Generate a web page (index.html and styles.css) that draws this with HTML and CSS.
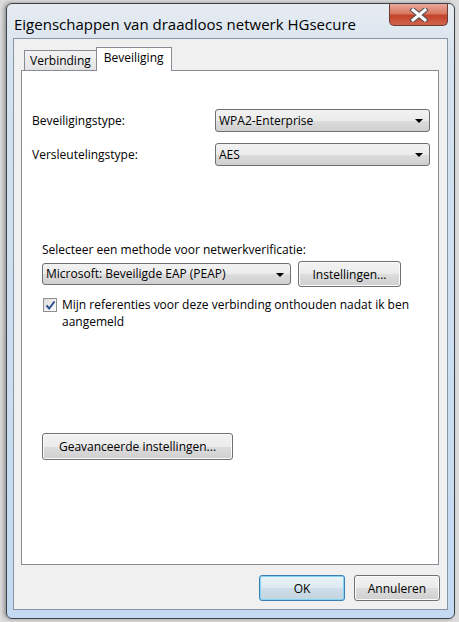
FILE: index.html
```html
<!DOCTYPE html>
<html lang="nl">
<head>
  <meta charset="UTF-8">
  <title>Eigenschappen van draadloos netwerk HGsecure</title>
  <link rel="stylesheet" href="styles.css">
</head>
<body>

<div class="window">
  <div class="titlebar">
    <span class="title">Eigenschappen van draadloos netwerk HGsecure</span>
    <div class="close">
      <svg width="20" height="14" viewBox="0 0 20 14">
        <path d="M4 2 L16 12 M16 2 L4 12" stroke="#4a4f56" stroke-width="5" stroke-linecap="square"/>
        <path d="M4 2 L16 12 M16 2 L4 12" stroke="#ffffff" stroke-width="3" stroke-linecap="square"/>
      </svg>
    </div>
  </div>

  <div class="client">
    <div class="tabs">
      <div class="tab">Verbinding</div>
      <div class="tab active">Beveiliging</div>
    </div>

    <div class="panel">
      <div class="row">
        <span class="label">Beveiligingstype:</span>
        <div class="select type">WPA2-Enterprise<span class="arrow"></span></div>
      </div>
      <div class="row">
        <span class="label">Versleutelingstype:</span>
        <div class="select type">AES<span class="arrow"></span></div>
      </div>

      <div class="auth">
        <div class="auth-label">Selecteer een methode voor netwerkverificatie:</div>
        <div class="auth-row">
          <div class="select method">Microsoft: Beveiligde EAP (PEAP)<span class="arrow"></span></div>
          <button class="btn settings">Instellingen...</button>
        </div>
        <div class="check">
          <span class="box">
            <svg width="11" height="11" viewBox="0 0 11 11">
              <path d="M1.5 5.5 L4.2 8.5 L9.5 1.5" fill="none" stroke="#2b4f8c" stroke-width="2"/>
            </svg>
          </span>
          <span class="check-text">Mijn referenties voor deze verbinding onthouden nadat ik ben aangemeld</span>
        </div>
      </div>

      <button class="btn advanced">Geavanceerde instellingen...</button>
    </div>

    <div class="footer">
      <button class="btn default">OK</button>
      <button class="btn">Annuleren</button>
    </div>
  </div>
</div>

</body>
</html>
```

FILE: styles.css
```css
* { box-sizing: border-box; }
body { margin: 0; width: 459px; height: 622px; overflow: hidden; background: #dcdcdc; font-family: "Open Sans", "Noto Sans", sans-serif; font-size: 12px; color: #000; }

.window { margin: 3px 0 0 6px; width: 449px; height: 616px; border: 1px solid #3d4249; border-radius: 6px; background: linear-gradient(#e6ebf0, #d5e2ef 60px, #c3daf2); box-shadow: -2px 0 4px rgba(0,0,0,0.35); display: flex; flex-direction: column; }

.titlebar { height: 34px; display: flex; justify-content: space-between; align-items: flex-start; padding-left: 7px; }
.title { font-size: 15px; line-height: 20px; margin-top: 10px; color: #000; }
.close { width: 59px; height: 22px; margin-right: 6px; border: 1px solid #6b3a33; border-top: none; border-radius: 0 0 5px 5px; background: linear-gradient(#e9a99c, #d9775f 45%, #c2432a 55%, #d0654c); display: flex; align-items: center; justify-content: center; }

.client { margin: 0 6px; height: 572px; border: 1px solid #8794a3; background: #f0f0f0; padding: 8px 0 0 7px; display: flex; flex-direction: column; }

.tabs { display: flex; align-items: flex-end; height: 24px; padding-left: 3px; margin-bottom: -1px; position: relative; z-index: 1; }
.tab { height: 20px; margin-bottom: 1px; padding: 0 5px; line-height: 19px; border: 1px solid #898c95; border-bottom: none; background: linear-gradient(#f3f3f3, #e3e3e3); }
.tab.active { height: 24px; margin-bottom: 0; margin-left: -1px; padding: 0 7px 0 7px; line-height: 20px; background: #fff; }

.panel { width: 418px; height: 495px; border: 1px solid #898c95; background: #fff; padding: 38px 8px 0 10px; display: flex; flex-direction: column; }

.row { display: flex; justify-content: space-between; align-items: center; margin-bottom: 11px; }

.select { position: relative; height: 23px; line-height: 21px; padding-left: 3px; border: 1px solid #707070; border-radius: 3px; background: linear-gradient(#f2f2f2, #ebebeb 50%, #dddddd 51%, #cfcfcf); }
.select.type { width: 215px; }
.arrow { position: absolute; right: 6px; top: 9px; border-left: 4px solid transparent; border-right: 4px solid transparent; border-top: 4px solid #000; }

.auth { margin: 65px 0 0 10px; }
.auth-label { line-height: 16px; }
.auth-row { display: flex; align-items: center; gap: 7px; margin-top: 3px; }
.select.method { width: 249px; height: 22px; line-height: 20px; }

.btn { font: inherit; color: #000; height: 26px; padding: 0; border: 1px solid #707070; border-radius: 3px; background: linear-gradient(#f2f2f2, #ebebeb 50%, #dddddd 51%, #cfcfcf); box-shadow: inset 0 0 0 1px #fcfcfc; }
.settings { width: 103px; }

.check { display: flex; align-items: flex-start; margin-top: 9px; padding-left: 1px; }
.box { width: 14px; height: 14px; margin-top: 2px; flex-shrink: 0; border: 1px solid #8e8f8f; background: linear-gradient(135deg, #dcdcdc, #fdfdfd); display: flex; align-items: center; justify-content: center; }
.check-text { margin-left: 5px; width: 360px; line-height: 17px; }

.advanced { width: 191px; height: 27px; margin: 103px 0 0 10px; }

.footer { display: flex; justify-content: flex-end; gap: 9px; padding-right: 7px; margin-top: 10px; }
.footer .btn { width: 86px; }
.btn.default { border-color: #3c7fb1; box-shadow: inset 0 0 0 1px #84d4f6; background: linear-gradient(#eaf3f8, #dde9f1 50%, #cfdee8 51%, #c3d4e0); }
```
